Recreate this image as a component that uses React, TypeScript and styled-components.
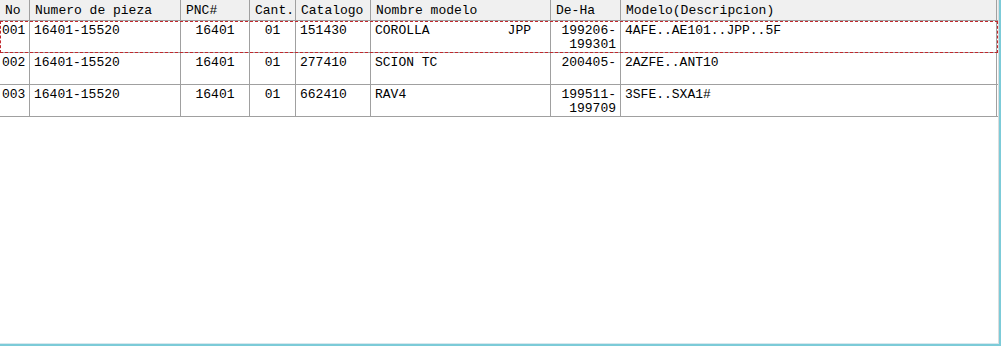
import React from 'react';
import styled, { createGlobalStyle } from 'styled-components';

interface Part {
    no: string;
    pieza: string;
    pnc: string;
    cant: string;
    catalogo: string;
    modelo: string;
    deHa: string[];
    descripcion: string;
}

const parts: Part[] = [
    { no: '001', pieza: '16401-15520', pnc: '16401', cant: '01', catalogo: '151430', modelo: 'COROLLA          JPP', deHa: ['199206-', '199301'], descripcion: '4AFE..AE101..JPP..5F' },
    { no: '002', pieza: '16401-15520', pnc: '16401', cant: '01', catalogo: '277410', modelo: 'SCION TC', deHa: ['200405-'], descripcion: '2AZFE..ANT10' },
    { no: '003', pieza: '16401-15520', pnc: '16401', cant: '01', catalogo: '662410', modelo: 'RAV4', deHa: ['199511-', '199709'], descripcion: '3SFE..SXA1#' },
];

const headers = ['No', 'Numero de pieza', 'PNC#', 'Cant.', 'Catalogo', 'Nombre modelo', 'De-Ha', 'Modelo(Descripcion)'];

export default function App() {
    return (
        <>
            <GlobalStyle />
            <Frame>
                <Inner>
                    <HeaderRow>
                        {headers.map((h) => (
                            <HeaderCell key={h}>{h}</HeaderCell>
                        ))}
                    </HeaderRow>
                    {parts.map((p, i) => (
                        <Row key={p.no} focused={i === 0}>
                            <Cell>{p.no}</Cell>
                            <Cell>{p.pieza}</Cell>
                            <Cell align='center'>{p.pnc}</Cell>
                            <Cell align='center'>{p.cant}</Cell>
                            <Cell>{p.catalogo}</Cell>
                            <Cell>{p.modelo}</Cell>
                            <Cell align='right'>
                                {p.deHa.map((l) => (
                                    <div key={l}>{l}</div>
                                ))}
                            </Cell>
                            <Cell>{p.descripcion}</Cell>
                        </Row>
                    ))}
                </Inner>
            </Frame>
        </>
    );
}

const GlobalStyle = createGlobalStyle`
    body {
        margin: 0;
        background: #fff;
    }
`;

const Frame = styled.div`
    width: 1001px;
    height: 346px;
    box-sizing: border-box;
    border-right: 2px solid #7ccbd8;
    border-bottom: 2px solid #7ccbd8;
    background: #fff;
`;

const Inner = styled.div`
    height: 100%;
    box-sizing: border-box;
    border-right: 1px solid #dcdcdc;
    border-bottom: 1px solid #d6e8ee;
    font-family: "Liberation Mono", "Courier New", monospace;
    font-size: 13px;
    color: #000;
`;

const columns = '30px 151px 69px 46px 75px 180px 70px 376px';

const HeaderRow = styled.div`
    display: grid;
    grid-template-columns: ${columns};
    height: 21px;
    box-sizing: border-box;
    background: #f0f0f0;
    border-bottom: 1px solid #a0a0a0;
`;

const HeaderCell = styled.div`
    border-right: 1px solid #a0a0a0;
    padding: 3px 0 0 5px;
    line-height: 15px;
    white-space: pre;
    overflow: hidden;
`;

const Row = styled.div<{ focused?: boolean }>`
    display: grid;
    grid-template-columns: ${columns};
    height: 32px;
    box-sizing: border-box;
    border-bottom: 1px solid #a0a0a0;
    outline: ${(props) => (props.focused ? '1px dashed #c0282d' : 'none')};
    outline-offset: -1px;
`;

const Cell = styled.div<{ align?: 'left' | 'center' | 'right' }>`
    border-right: 1px solid #a0a0a0;
    padding: 3px 4px 0 4px;
    line-height: 14px;
    text-align: ${(props) => props.align || 'left'};
    white-space: pre;
    overflow: hidden;
    &:first-child {
        padding-left: 2px;
    }
`;
